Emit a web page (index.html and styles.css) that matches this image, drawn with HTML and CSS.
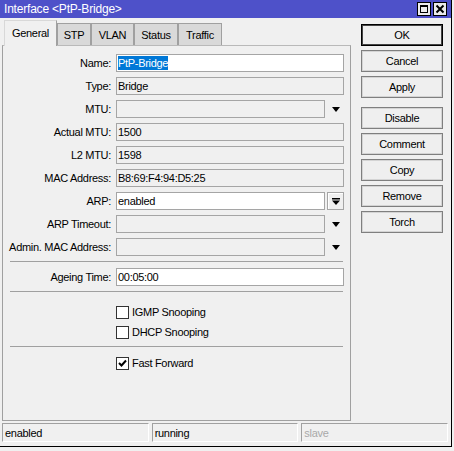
FILE: index.html
```html
<!DOCTYPE html>
<html>
<head>
    <title>Interface &lt;PtP-Bridge&gt;</title>
    <meta name="viewport" content="width=device-width, initial-scale=1">
    <link rel="stylesheet" href="styles.css">
</head>
<body>
    <div class="window">
        <!-- Title bar -->
        <div class="titlebar">
            <span class="title">Interface &lt;PtP-Bridge&gt;</span>
            <div class="title-btns">
                <span class="tbtn">
                    <svg width="12" height="12" viewBox="0 0 12 12"><rect x="2.5" y="2.5" width="7" height="7" fill="none" stroke="#000" stroke-width="1"/><rect x="2" y="2" width="8" height="2" fill="#000"/></svg>
                </span>
                <span class="tbtn">
                    <svg width="12" height="12" viewBox="0 0 12 12"><path d="M2.5 2.5 L9.5 9.5 M9.5 2.5 L2.5 9.5" stroke="#000" stroke-width="2"/></svg>
                </span>
            </div>
        </div>

        <div class="content">
            <div class="main">
                <!-- Tabs -->
                <div class="tabs">
                    <div class="tab active" style="width:53px">General</div>
                    <div class="tab" style="width:34px">STP</div>
                    <div class="tab" style="width:43px">VLAN</div>
                    <div class="tab" style="width:44px">Status</div>
                    <div class="tab" style="width:44px">Traffic</div>
                </div>

                <!-- General tab -->
                <div class="panel">
                    <div class="row">
                        <label>Name:</label>
                        <div class="field edit"><span class="sel">PtP-Bridge</span></div>
                    </div>
                    <div class="row">
                        <label>Type:</label>
                        <div class="field">Bridge</div>
                    </div>
                    <div class="row">
                        <label>MTU:</label>
                        <div class="combo">
                            <div class="field"></div>
                            <span class="drop"><svg width="8" height="5" viewBox="0 0 8 5"><path d="M0 0 H8 L4 5 Z" fill="#000"/></svg></span>
                        </div>
                    </div>
                    <div class="row">
                        <label>Actual MTU:</label>
                        <div class="field">1500</div>
                    </div>
                    <div class="row">
                        <label>L2 MTU:</label>
                        <div class="field">1598</div>
                    </div>
                    <div class="row">
                        <label>MAC Address:</label>
                        <div class="field">B8:69:F4:94:D5:25</div>
                    </div>
                    <div class="row">
                        <label>ARP:</label>
                        <div class="combo">
                            <div class="field edit">enabled</div>
                            <span class="drop boxed"><svg width="8" height="7" viewBox="0 0 8 7"><rect x="0" y="0" width="8" height="1.5" fill="#000"/><path d="M0 2.5 H8 L4 7 Z" fill="#000"/></svg></span>
                        </div>
                    </div>
                    <div class="row">
                        <label>ARP Timeout:</label>
                        <div class="combo">
                            <div class="field"></div>
                            <span class="drop"><svg width="8" height="5" viewBox="0 0 8 5"><path d="M0 0 H8 L4 5 Z" fill="#000"/></svg></span>
                        </div>
                    </div>
                    <div class="row">
                        <label>Admin. MAC Address:</label>
                        <div class="combo">
                            <div class="field"></div>
                            <span class="drop"><svg width="8" height="5" viewBox="0 0 8 5"><path d="M0 0 H8 L4 5 Z" fill="#000"/></svg></span>
                        </div>
                    </div>

                    <div class="sep"></div>

                    <div class="row">
                        <label>Ageing Time:</label>
                        <div class="field edit">00:05:00</div>
                    </div>

                    <div class="sep"></div>

                    <div class="checks">
                        <div class="check-row"><span class="cb"></span>IGMP Snooping</div>
                        <div class="check-row"><span class="cb"></span>DHCP Snooping</div>
                    </div>

                    <div class="sep"></div>

                    <div class="check-row"><span class="cb"><svg width="9" height="9" viewBox="0 0 9 9"><path d="M1 4 L3.5 6.5 L8 1.5" fill="none" stroke="#000" stroke-width="2"/></svg></span>Fast Forward</div>
                </div>
            </div>

            <!-- Action buttons -->
            <div class="actions">
                <div class="btn default">OK</div>
                <div class="btn">Cancel</div>
                <div class="btn">Apply</div>
                <div class="btn-gap"></div>
                <div class="btn">Disable</div>
                <div class="btn">Comment</div>
                <div class="btn">Copy</div>
                <div class="btn">Remove</div>
                <div class="btn">Torch</div>
            </div>
        </div>

        <!-- Status bar -->
        <div class="status">
            <div class="cell">enabled</div>
            <div class="cell">running</div>
            <div class="cell muted">slave</div>
        </div>
    </div>
</body>
</html>
```

FILE: styles.css
```css
body { margin: 0; background: #f0f0f0; font-family: "Liberation Sans", Arial, sans-serif; font-size: 11px; letter-spacing: -0.3px; color: #000; }
.window { width: 452px; height: 447px; box-sizing: border-box; background: #f0f0f0; border-right: 1px solid #000; border-bottom: 1px solid #000; display: flex; flex-direction: column; }

/* title bar */
.titlebar { height: 18px; flex: none; background: #4e51c9; color: #fff; font-size: 12px; letter-spacing: -0.2px; display: flex; align-items: center; justify-content: space-between; padding: 0 4px 0 4px; }
.title-btns { display: flex; gap: 2px; }
.tbtn { width: 14px; height: 14px; box-sizing: border-box; border: 1px solid #000; background: #ececec; display: flex; align-items: center; justify-content: center; }

.content { display: flex; flex: 1; }
.main { width: 349px; margin-left: 2px; display: flex; flex-direction: column; }

/* tabs */
.tabs { display: flex; align-items: flex-end; height: 27px; flex: none; padding-left: 2px; box-sizing: border-box; }
.tab { height: 22px; box-sizing: border-box; border: 1px solid #a0a0a0; border-bottom: none; background: #d9d9d9; display: flex; align-items: center; justify-content: center; }
.tab.active { height: 26px; margin-bottom: -1px; position: relative; z-index: 1; background: #f0f0f0; border-color: #d8d8d8 #a0a0a0 #f0f0f0 #d8d8d8; padding-bottom: 2px; }

.panel { flex: 1; border: 1px solid #a0a0a0; border-top-color: #b9b9b9; padding: 8px 6px 0 0; }

/* form rows */
.row { display: flex; align-items: center; height: 18px; margin-bottom: 5px; }
.row label { width: 108px; flex: none; text-align: right; margin-right: 5px; }
.field { flex: 1; height: 18px; box-sizing: border-box; border: 1px solid #a5a5a5; background: #f0f0f0; padding: 0 1px; display: flex; align-items: center; white-space: nowrap; }
.field.edit { background: #fff; }
.sel { background: #0078d7; color: #fff; line-height: 14px; }
.combo { flex: 1; display: flex; }
.drop { width: 17px; height: 18px; margin-left: 2px; box-sizing: border-box; display: flex; align-items: center; justify-content: center; }
.drop.boxed { border: 1px solid #a5a5a5; background: #f0f0f0; box-shadow: inset 1px 1px 0 #fff; }

.sep { border-top: 1px solid #a0a0a0; margin: 0 1px 6px 7px; }

/* check boxes */
.checks { padding-top: 4px; margin-bottom: 4px; }
.check-row { display: flex; align-items: center; height: 20px; padding-left: 113px; }
.cb { width: 13px; height: 13px; box-sizing: border-box; border: 1px solid #333; background: #fff; margin-right: 3px; display: flex; align-items: center; justify-content: center; }

/* right column buttons */
.actions { width: 82px; margin-left: 10px; padding-top: 6px; display: flex; flex-direction: column; }
.btn { height: 22px; margin-bottom: 4px; box-sizing: border-box; border: 1px solid #7f7f7f; box-shadow: inset 0 0 0 1px #d4d4d4; background: #efefef; display: flex; align-items: center; justify-content: center; }
.btn.default { border-color: #000; box-shadow: inset 0 0 0 1px #444; }
.btn-gap { height: 5px; }

/* status bar */
.status { display: grid; grid-template-columns: repeat(3, 1fr); gap: 3px; height: 19px; flex: none; margin: 2px 3px 4px 2px; }
.cell { border: 1px solid; border-color: #a0a0a0 #fff #fff #a0a0a0; padding-left: 2px; display: flex; align-items: center; }
.muted { color: #a9a9a9; }
```
